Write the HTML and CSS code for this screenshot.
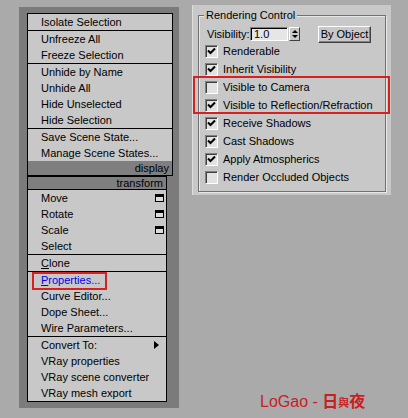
FILE: index.html
```html
<!DOCTYPE html>
<html lang="en">
<head>
    <meta charset="UTF-8">
    <meta name="viewport" content="width=device-width, initial-scale=1.0">
    <title>Quad Menu</title>

    <link rel="stylesheet" href="styles.css">
</head>
<body>
    <div class="page">
        <div class="quad">
            <div class="menu menu-top">
                <div class="item">Isolate Selection</div>
                <div class="sep"></div>
                <div class="item">Unfreeze All</div>
                <div class="item">Freeze Selection</div>
                <div class="sep"></div>
                <div class="item">Unhide by Name</div>
                <div class="item">Unhide All</div>
                <div class="item">Hide Unselected</div>
                <div class="item">Hide Selection</div>
                <div class="sep"></div>
                <div class="item">Save Scene State...</div>
                <div class="item">Manage Scene States...</div>
                <div class="bar bar-display">display</div>
            </div>
            <div class="menu menu-bottom">
                <div class="bar bar-transform">transform</div>
                <div class="item">Move <span class="win"></span></div>
                <div class="item">Rotate <span class="win"></span></div>
                <div class="item">Scale <span class="win"></span></div>
                <div class="item">Select</div>
                <div class="sep"></div>
                <div class="item"><span><u>C</u>lone</span></div>
                <div class="sep"></div>
                <div class="item item-marked"><span class="link"><u>P</u>roperties...</span><span class="mark"></span></div>
                <div class="item">Curve Editor...</div>
                <div class="item">Dope Sheet...</div>
                <div class="item">Wire Parameters...</div>
                <div class="sep"></div>
                <div class="item">Convert To: <span class="arrow"></span></div>
                <div class="item">VRay properties</div>
                <div class="item">VRay scene converter</div>
                <div class="item">VRay mesh export</div>
            </div>
        </div>

        <div class="side">
            <div class="panel">
                <div class="group">
                    <span class="legend">Rendering Control</span>
                    <div class="vis-row">
                        <span class="vis-label">Visibility:</span>
                        <span class="field">1.0</span>
                        <span class="spin"><span class="up"></span><span class="down"></span></span>
                        <span class="btn">By Object</span>
                    </div>
                    <div class="check-row"><span class="box on"></span>Renderable</div>
                    <div class="check-row"><span class="box on"></span>Inherit Visibility</div>
                    <div class="check-row"><span class="box"></span>Visible to Camera</div>
                    <div class="check-row"><span class="box on"></span>Visible to Reflection/Refraction</div>
                    <div class="check-row"><span class="box on"></span>Receive Shadows</div>
                    <div class="check-row"><span class="box on"></span>Cast Shadows</div>
                    <div class="check-row"><span class="box on"></span>Apply Atmospherics</div>
                    <div class="check-row"><span class="box"></span>Render Occluded Objects</div>
                </div>
                <div class="mark-panel"></div>
            </div>
            <div class="logo">LoGao - <b class="big">日</b><b class="small">與</b><b class="big">夜</b></div>
        </div>
    </div>
</body>
</html>
```

FILE: styles.css
```css
body {
    margin: 0;
    background-color: #aaaaaa;
    font-family: "Liberation Sans", Arial, sans-serif;
    font-size: 11px;
    color: #000;
}

.page {
    display: flex;
    height: 418px;
}

/* quad menu */
.quad {
    margin: 7px 0 0 19px;
    width: 160px;
    height: 401px;
    box-sizing: border-box;
    padding: 6px 0 0 8px;
    background-color: #7b7b7b;
}

.menu {
    background-color: #c8c8c8;
    border: 1px solid #000;
    box-sizing: border-box;
}

.menu-top {
    width: 146px;
}

.menu-bottom {
    width: 140px;
}

.item {
    position: relative;
    display: flex;
    justify-content: space-between;
    align-items: center;
    height: 16px;
    line-height: 16px;
    padding: 0 2px 0 13px;
    white-space: nowrap;
}

.sep {
    height: 1px;
    background-color: #000;
}

.bar {
    background-color: #7f7f7f;
    text-align: right;
    padding-right: 3px;
}

.bar-display {
    height: 14px;
    line-height: 14px;
}

.bar-transform {
    height: 13px;
    line-height: 13px;
    border-bottom: 1px solid #000;
    height: 12px;
}

.win {
    width: 9px;
    height: 8px;
    box-sizing: border-box;
    border: 1px solid #000;
    border-top-width: 3px;
    background-color: #dcdcdc;
}

.arrow {
    width: 0;
    height: 0;
    margin-right: 5px;
    border-left: 5px solid #000;
    border-top: 4px solid transparent;
    border-bottom: 4px solid transparent;
}

.link {
    color: #0000ee;
}

.mark {
    position: absolute;
    left: 4px;
    top: 0;
    width: 75px;
    height: 18px;
    box-sizing: border-box;
    border: 2px solid #d22222;
}

/* right panel */
.side {
    display: flex;
    flex-direction: column;
    margin-left: 13px;
}

.panel {
    position: relative;
    margin-top: 5px;
    width: 199px;
    height: 190px;
    box-sizing: border-box;
    padding: 10px 6px 0 5px;
    background-color: #c8c8c8;
    border-left: 1px solid #dedede;
}

.group {
    position: relative;
    width: 188px;
    height: 177px;
    box-sizing: border-box;
    border: 1px solid #707070;
    box-shadow: inset 1px 1px 0 #e8e8e8, 1px 1px 0 #e8e8e8;
    padding: 10px 0 0 6px;
}

.legend {
    position: absolute;
    top: -7px;
    left: 5px;
    padding: 0 2px;
    line-height: 13px;
    background-color: #c8c8c8;
}

.vis-row {
    display: flex;
    align-items: center;
    height: 16px;
}

.vis-label {
    width: 45px;
    box-sizing: border-box;
    padding-left: 2px;
}

.field {
    width: 38px;
    height: 14px;
    box-sizing: border-box;
    padding-left: 3px;
    line-height: 12px;
    background-color: #e6e6e6;
    border: 1px solid;
    border-color: #808080 #ffffff #ffffff #808080;
    box-shadow: inset 1px 1px 0 #000;
}

.spin {
    display: flex;
    flex-direction: column;
    justify-content: center;
    align-items: center;
    gap: 2px;
    width: 11px;
    height: 14px;
    margin-left: 1px;
    box-sizing: border-box;
    border: 1px solid;
    border-color: #ffffff #404040 #404040 #ffffff;
}

.up,
.down {
    width: 0;
    height: 0;
    border-left: 3px solid transparent;
    border-right: 3px solid transparent;
}

.up {
    border-bottom: 3px solid #000;
}

.down {
    border-top: 3px solid #000;
}

.btn {
    width: 53px;
    height: 17px;
    margin-left: 18px;
    box-sizing: border-box;
    text-align: center;
    line-height: 14px;
    border: 1px solid;
    border-color: #ffffff #404040 #404040 #ffffff;
    box-shadow: inset -1px -1px 0 #808080;
}

.check-row {
    display: flex;
    align-items: center;
    height: 18px;
    white-space: nowrap;
}

.box {
    width: 13px;
    height: 13px;
    margin-right: 5px;
    box-sizing: border-box;
    background-color: #e2e2e2;
    border: 1px solid;
    border-color: #808080 #ffffff #ffffff #808080;
    box-shadow: inset 1px 1px 0 #404040;
}

.box.on {
    background: #e2e2e2 url("data:image/svg+xml;utf8,<svg xmlns='http://www.w3.org/2000/svg' width='11' height='11'><path d='M2 4.5 L4.5 7 L9 2.5' fill='none' stroke='black' stroke-width='2'/></svg>") no-repeat 0 0;
}

.mark-panel {
    position: absolute;
    left: 0;
    top: 71px;
    width: 197px;
    height: 38px;
    box-sizing: border-box;
    border: 2px solid #d22222;
}

.logo {
    margin: auto 0 6px 68px;
    color: #c8201f;
    font-size: 16px;
    line-height: 20px;
    white-space: nowrap;
}

.big,
.small {
    font-family: "Noto Sans CJK TC", "Noto Sans CJK SC", sans-serif;
}

.big {
    font-size: 16px;
}

.small {
    font-size: 11px;
}
```
